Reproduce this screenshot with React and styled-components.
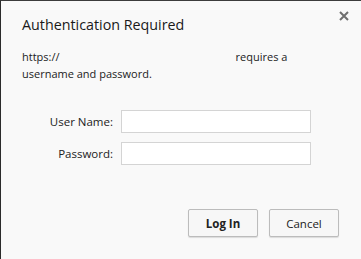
import styled, { createGlobalStyle } from 'styled-components';

const Global = createGlobalStyle`
html, body { margin:0; padding:0; background:#f9f9f9; }
* { box-sizing:border-box; }
`;

const Dialog = styled.div`
position:relative;
width:361px;
height:259px;
background:#f9f9f9;
border-top:1px solid #3c3c3c;
border-left:1px solid #2b2b2b;
font-family:"Open Sans", "Noto Sans", sans-serif;
color:#222;
padding:13px 0 0 21px;
display:flex;
flex-direction:column;
`;

const Close = styled.button`
position:absolute;
top:9px;
right:11px;
width:12px;
height:12px;
padding:0;
border:none;
background:none;
display:flex;
align-items:center;
justify-content:center;
`;

const Title = styled.h1`
margin:0;
font-size:14.3px;
font-weight:400;
color:#1a1a1a;
line-height:21px;
`;

const Message = styled.p`
margin:13px 0 0;
font-size:11px;
line-height:17px;
width:290px;
`;

const Hidden = styled.span`
display:inline-block;
width:176px;
`;

const Form = styled.div`
margin-top:28px;
display:grid;
grid-template-columns:91px 190px;
column-gap:8px;
row-gap:9px;
align-items:center;
`;

const Label = styled.label`
font-size:11.5px;
text-align:right;
`;

const Input = styled.input`
height:23px;
border:1px solid #d4d4d4;
background:#fff;
outline:none;
`;

const Buttons = styled.div`
margin-top:44px;
display:flex;
justify-content:flex-end;
gap:11px;
padding-right:22px;
`;

const Button = styled.button`
width:70px;
height:28px;
border:1px solid #bcbcbc;
border-radius:2px;
background:#f7f7f7;
box-shadow:0 1px 1px rgba(0,0,0,0.12);
font-family:"Open Sans", "Noto Sans", sans-serif;
font-size:11.5px;
font-weight:${p => (p.$primary ? 700 : 400)};
color:#222;
padding:0;
`;

export default function App() {
  return (
    <>
      <Global />
      <Dialog>
        <Close aria-label="Close">
          <svg width="10" height="10" viewBox="0 0 10 10">
            <path d="M1 1L9 9M9 1L1 9" stroke="#6f6f6f" strokeWidth="2" />
          </svg>
        </Close>
        <Title>Authentication Required</Title>
        <Message>
          <span>https://</span>
          <Hidden />
          <span>requires a</span>
          <br />
          <span>username and password.</span>
        </Message>
        <Form>
          <Label>User Name:</Label>
          <Input type="text" />
          <Label>Password:</Label>
          <Input type="password" />
        </Form>
        <Buttons>
          <Button $primary>Log In</Button>
          <Button>Cancel</Button>
        </Buttons>
      </Dialog>
    </>
  );
}
